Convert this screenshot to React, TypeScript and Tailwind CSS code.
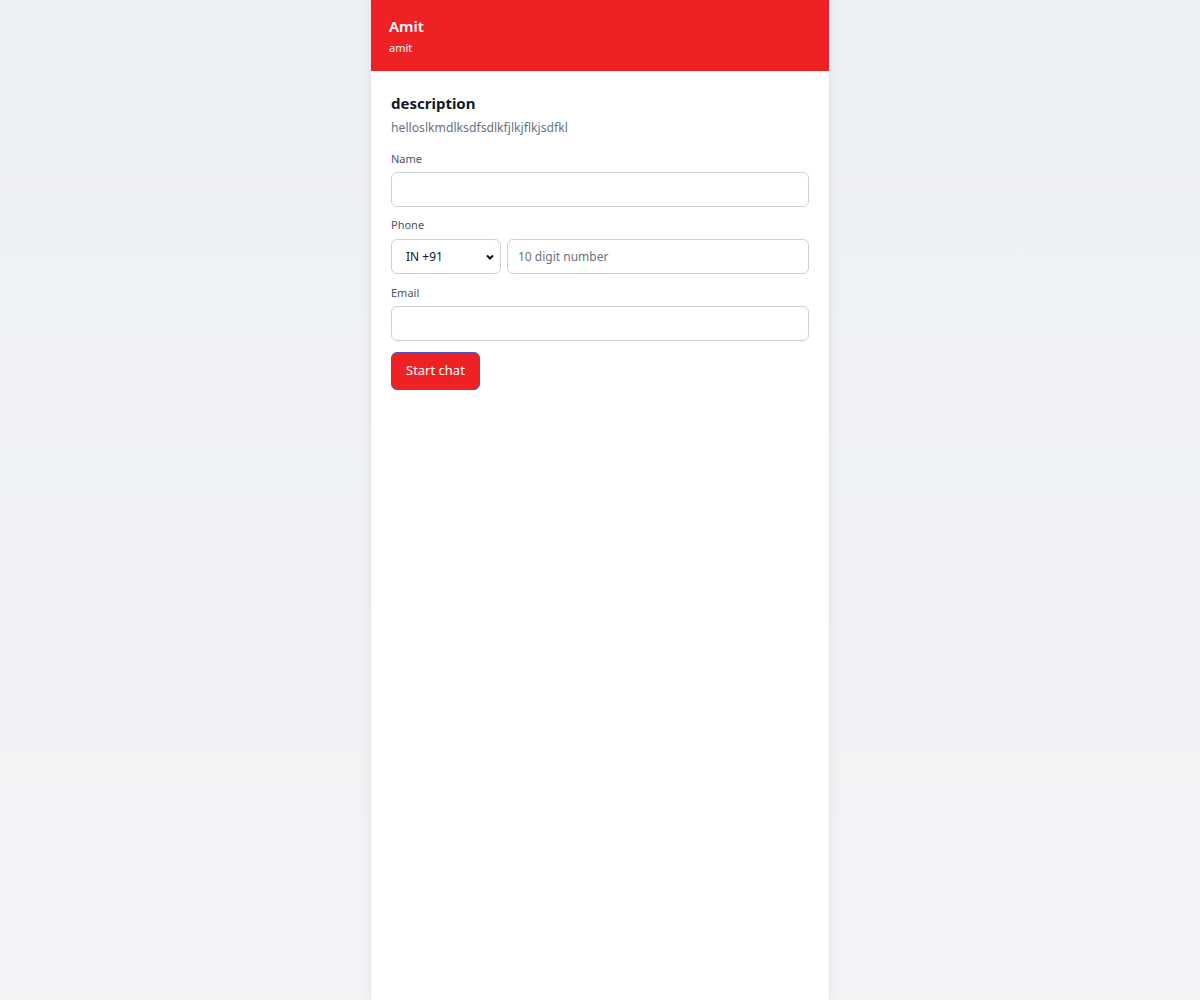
import React from "react";

export default function App() {
  const font = { fontFamily: '"Segoe UI", "Noto Sans", "Open Sans", sans-serif' };
  return (
    <div
      className="min-h-screen w-full bg-gradient-to-b from-[#edf0f5] to-[#f3f4f6] flex justify-center"
      style={font}
    >
      <div className="w-[460px] min-h-screen bg-white border-x border-[#e2e5ea] shadow-[0_0_12px_rgba(15,23,42,0.06)] flex flex-col">
        <div className="bg-[#ee2224] h-[71px] px-[18px] pt-[15px]">
          <div className="text-white text-[15px] font-semibold leading-[22px]">Amit</div>
          <div className="text-white text-[11px] leading-[16px] mt-[3px]">amit</div>
        </div>
        <div className="px-5 pt-[21px]">
          <div className="text-[15px] font-bold text-[#111827] leading-[22px]">description</div>
          <div className="text-[12.2px] text-[#6b7280] leading-[18px] mt-[5px]">
            helloslkmdlksdfsdlkfjlkjflkjsdfkl
          </div>
          <div className="mt-[14px]">
            <label className="block text-[11px] text-[#4b5563] leading-[16px]">Name</label>
            <input
              className="mt-[5px] w-full h-[35px] rounded-[6px] border border-[#cbd2dc] px-3 text-[12px] outline-none"
              style={font}
            />
          </div>
          <div className="mt-[10px]">
            <label className="block text-[11px] text-[#4b5563] leading-[16px]">Phone</label>
            <div className="mt-[6px] flex gap-[6px]">
              <div className="relative w-[110px] h-[35px] rounded-[6px] border border-[#cbd2dc] flex items-center pl-[14px] text-[12px] text-[#111827]">
                IN +91
                <svg
                  className="absolute right-[5px] top-1/2 -translate-y-1/2"
                  width="10"
                  height="10"
                  viewBox="0 0 10 10"
                >
                  <path d="M2 3.5 L5 6.5 L8 3.5" stroke="#111" strokeWidth="2" fill="none" />
                </svg>
              </div>
              <input
                placeholder="10 digit number"
                className="flex-1 h-[35px] rounded-[6px] border border-[#cbd2dc] px-[10px] text-[12px] outline-none placeholder:text-[#6b7280]"
                style={font}
              />
            </div>
          </div>
          <div className="mt-[11px]">
            <label className="block text-[11px] text-[#4b5563] leading-[16px]">Email</label>
            <input
              className="mt-[5px] w-full h-[35px] rounded-[6px] border border-[#cbd2dc] px-3 text-[12px] outline-none"
              style={font}
            />
          </div>
          <button
            className="mt-[11px] h-[38px] px-[14px] rounded-[6px] bg-[#ee2224] border border-[#4a56c8] text-white text-[13px]"
            style={font}
          >
            Start chat
          </button>
        </div>
      </div>
    </div>
  );
}
